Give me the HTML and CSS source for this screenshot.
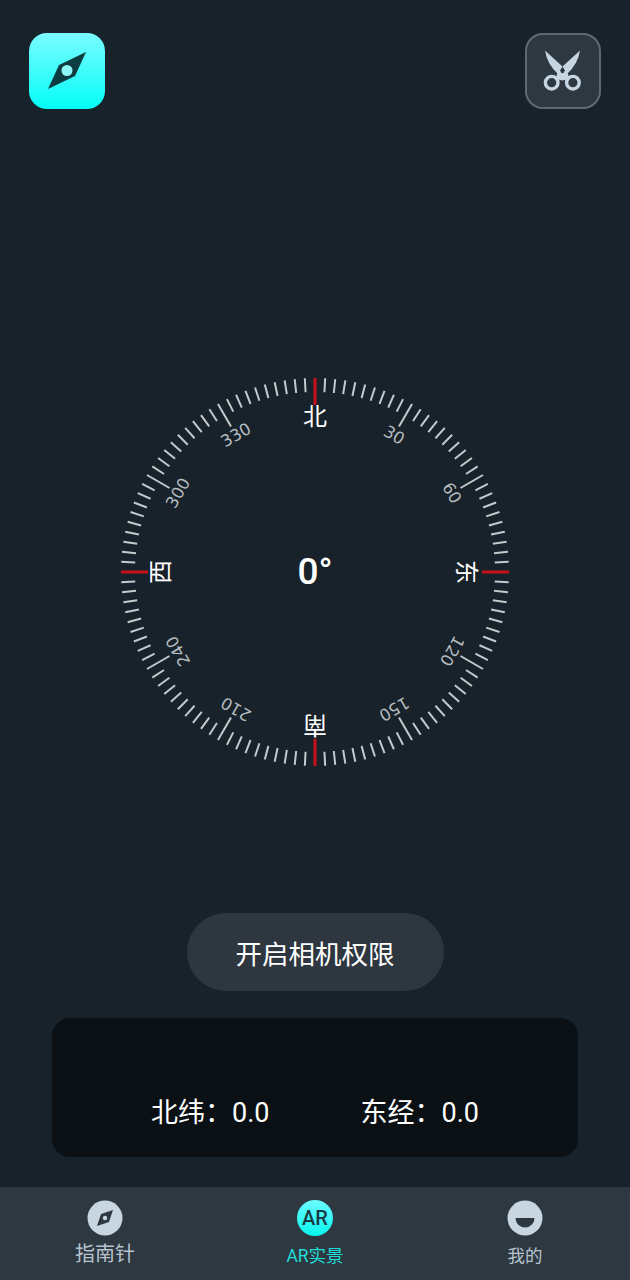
FILE: index.html
```html
<!DOCTYPE html>
<html lang="zh-CN">
<head>
  <meta charset="UTF-8">
  <meta name="viewport" content="width=device-width, initial-scale=1.0">
  <title>指南针</title>
  <link rel="stylesheet" href="styles.css">
</head>
<body>
  <div class="top-bar">
    <div class="logo">
      <svg viewBox="0 0 76 76" width="76" height="76">
        <polygon points="57,19 46,43 19,56 30,32" fill="#0d3d40"/>
        <circle cx="38" cy="37.5" r="5.5" fill="#8ff8f6"/>
      </svg>
    </div>
    <div class="cut-btn">
      <svg viewBox="0 0 76 76" width="76" height="76">
        <path d="M20 17.5 L37.5 33.5 L33 41 Q22 31 20 17.5 Z" fill="#c5d5e1"/>
        <path d="M55 17.5 L37.5 33.5 L42 41 Q53 31 55 17.5 Z" fill="#c5d5e1"/>
        <path d="M33 38 H42 L44.5 46 L37.5 47.5 L30.5 46 Z" fill="#c5d5e1"/>
        <circle cx="37.5" cy="38.5" r="1.8" fill="#2e3840"/>
        <circle cx="26.7" cy="49.7" r="6.3" fill="#2e3840" stroke="#c5d5e1" stroke-width="3.4"/>
        <circle cx="47.9" cy="49.7" r="6.3" fill="#2e3840" stroke="#c5d5e1" stroke-width="3.4"/>
      </svg>
    </div>
  </div>

  <svg class="dial" id="dial" viewBox="0 0 400 400" width="400" height="400">
    <text class="degree" x="200" y="199">0°</text>
  </svg>

  <button class="camera-btn">开启相机权限</button>

  <div class="coords">
    <span>北纬：0.0</span>
    <span>东经：0.0</span>
  </div>

  <div class="tab-bar">
    <div class="tab">
      <svg viewBox="0 0 36 36" width="36" height="36">
        <circle cx="18" cy="18" r="17.5" fill="#c8d6e1"/>
        <polygon points="26,10 22,22 10,26 14,14" fill="#2e3841"/>
        <circle cx="18" cy="18" r="2.2" fill="#c8d6e1"/>
      </svg>
      <span class="tab-label big">指南针</span>
    </div>
    <div class="tab active">
      <div class="ar-icon">AR</div>
      <span class="tab-label">AR实景</span>
    </div>
    <div class="tab">
      <svg viewBox="0 0 36 36" width="36" height="36">
        <circle cx="18" cy="18" r="17.5" fill="#c8d6e1"/>
        <path d="M8.5 18 H27.5 A9.5 9.5 0 0 1 8.5 18 Z" fill="#2e3841"/>
      </svg>
      <span class="tab-label">我的</span>
    </div>
  </div>

  <script>
    // tick marks and labels of the dial
    const svgNS = 'http://www.w3.org/2000/svg';
    const dial = document.getElementById('dial');
    // y is where the glyph sits when the dial is turned to north
    const names = {
      0: { text: '北', y: 45 },
      90: { text: '东', y: 49 },
      180: { text: '南', y: 47 },
      270: { text: '西', y: 46 }
    };

    function add(tag, attrs, text) {
      const el = document.createElementNS(svgNS, tag);
      for (const key in attrs) {
        el.setAttribute(key, attrs[key]);
      }
      if (text) {
        el.textContent = text;
      }
      dial.appendChild(el);
    }

    for (let deg = 0; deg < 360; deg += 3) {
      const turn = `rotate(${deg} 200 200)`;
      let cls = 'tick';
      let len = 14;
      if (deg % 90 === 0) {
        cls = 'tick red';
        len = 27;
      } else if (deg % 30 === 0) {
        cls = 'tick long';
        len = 26;
      }
      add('line', { class: cls, x1: 200, y1: 6, x2: 200, y2: 6 + len, transform: turn });

      if (names[deg]) {
        add('text', { class: 'name', x: 200, y: names[deg].y, transform: turn }, names[deg].text);
      } else if (deg % 30 === 0) {
        add('text', { class: 'num', x: 200, y: 42, transform: turn }, String(deg));
      }
    }
  </script>
</body>
</html>
```

FILE: styles.css
```css
body {
  margin: 0;
  height: 1280px;
  display: flex;
  flex-direction: column;
  align-items: center;
  background: #18222a;
  font-family: Roboto, "Noto Sans CJK SC", sans-serif;
  color: #fff;
}
.top-bar {
  width: 572px;
  margin-top: 33px;
  display: flex;
  justify-content: space-between;
}
.logo {
  width: 76px;
  height: 76px;
  border-radius: 18px;
  background: linear-gradient(#7afbff, #03fdf6);
}
.logo svg, .cut-btn svg, .tab svg {
  display: block;
}
.cut-btn {
  width: 76px;
  height: 76px;
  border-radius: 18px;
  background: #2e3840;
  box-shadow: inset 0 0 0 2px #5d6871;
}
.dial {
  display: block;
  flex: none;
  margin-top: 263px;
}
.tick {
  stroke: #c4c9cc;
  stroke-width: 2;
}
.tick.red {
  stroke: #c8101a;
  stroke-width: 3;
}
.degree {
  fill: #fff;
  font-size: 37px;
  font-weight: 500;
  text-anchor: middle;
  dominant-baseline: central;
}
.name {
  fill: #fff;
  font-size: 24px;
  text-anchor: middle;
  dominant-baseline: central;
}
.num {
  fill: #b5bcc0;
  font-family: "DejaVu Sans", sans-serif;
  font-size: 16.5px;
  text-anchor: middle;
  dominant-baseline: central;
}
.camera-btn {
  display: block;
  width: 257px;
  height: 78px;
  margin-top: 141px;
  border: none;
  border-radius: 39px;
  background: #2e3740;
  color: #fff;
  font-family: inherit;
  font-size: 26.5px;
}
.coords {
  width: 526px;
  height: 139px;
  margin-top: 27px;
  padding-bottom: 27px;
  box-sizing: border-box;
  display: flex;
  justify-content: center;
  align-items: flex-end;
  gap: 91px;
  border-radius: 18px;
  background: #0b1014;
  font-size: 27px;
}
.tab-bar {
  width: 100%;
  height: 93px;
  margin-top: 30px;
  display: grid;
  grid-template-columns: 1fr 1fr 1fr;
  background: #2e3841;
}
.tab {
  display: flex;
  flex-direction: column;
  align-items: center;
  padding-top: 13px;
  color: #b6c3ce;
}
.tab.active {
  color: #1fdcd8;
}
.ar-icon {
  width: 36px;
  height: 36px;
  border-radius: 50%;
  background: linear-gradient(#6cfbff, #08f5ee);
  color: #1a3a45;
  font-size: 20px;
  font-weight: 500;
  line-height: 36px;
  text-align: center;
}
.tab-label {
  margin-top: 8px;
  font-size: 17.5px;
  line-height: 24px;
}
.tab-label.big {
  margin-top: 4px;
  font-size: 20px;
  line-height: 28px;
}
```
